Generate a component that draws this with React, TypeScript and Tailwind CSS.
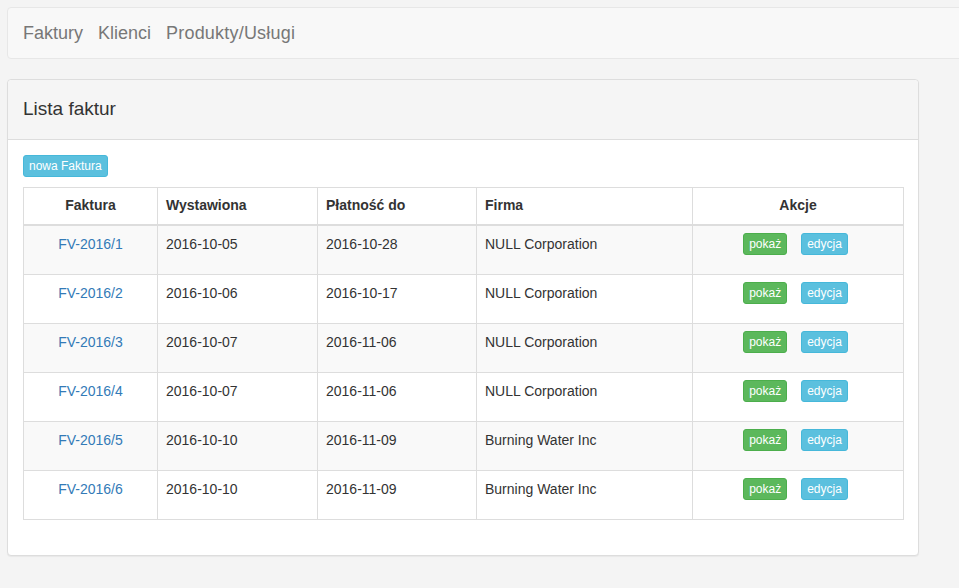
import React from "react";

const rows = [
  ["FV-2016/1", "2016-10-05", "2016-10-28", "NULL Corporation"],
  ["FV-2016/2", "2016-10-06", "2016-10-17", "NULL Corporation"],
  ["FV-2016/3", "2016-10-07", "2016-11-06", "NULL Corporation"],
  ["FV-2016/4", "2016-10-07", "2016-11-06", "NULL Corporation"],
  ["FV-2016/5", "2016-10-10", "2016-11-09", "Burning Water Inc"],
  ["FV-2016/6", "2016-10-10", "2016-11-09", "Burning Water Inc"],
];

export default function App() {
  return (
    <div
      className="w-[959px] h-[588px] overflow-hidden bg-[#f4f4f4] pt-[7px] pl-[7px] text-[14px] text-[#333]"
      style={{ fontFamily: '"Liberation Sans", Arial, sans-serif' }}
    >
      <nav className="w-[970px] h-[52px] bg-[#f8f8f8] border border-[#e7e7e7] rounded-[4px] flex items-center pl-[15px] gap-[15px] text-[18px] text-[#777]">
        <span>Faktury</span>
        <span>Klienci</span>
        <span className="tracking-[0.2px]">Produkty/Usługi</span>
      </nav>
      <div className="mt-[20px] w-[912px] bg-white border border-[#ddd] rounded-[4px] shadow-[0_1px_1px_rgba(0,0,0,0.05)]">
        <div className="h-[60px] bg-[#f5f5f5] border-b border-[#ddd] rounded-t-[4px] flex items-center px-[15px] text-[19px] text-[#333]">
          Lista faktur
        </div>
        <div className="px-[15px] pt-[15px] pb-[35px]">
          <div className="flex">
            <span className="h-[22px] px-[5px] flex items-center bg-[#5bc0de] border border-[#46b8da] rounded-[3px] text-white text-[12px]">
              nowa Faktura
            </span>
          </div>
          <table className="mt-[10px] w-[880px] border-collapse border border-[#ddd] table-fixed">
            <colgroup>
              <col className="w-[134px]" />
              <col className="w-[160px]" />
              <col className="w-[159px]" />
              <col className="w-[216px]" />
              <col className="w-[211px]" />
            </colgroup>
            <thead>
              <tr className="h-[37px]">
                <th className="border border-[#ddd] border-b-2 px-[8px] text-center font-bold">Faktura</th>
                <th className="border border-[#ddd] border-b-2 px-[8px] text-left font-bold">Wystawiona</th>
                <th className="border border-[#ddd] border-b-2 px-[8px] text-left font-bold">Płatność do</th>
                <th className="border border-[#ddd] border-b-2 px-[8px] text-left font-bold">Firma</th>
                <th className="border border-[#ddd] border-b-2 px-[8px] text-center font-bold">Akcje</th>
              </tr>
            </thead>
            <tbody>
              {rows.map((r, i) => (
                <tr key={i} className={i % 2 === 0 ? "bg-[#f9f9f9] h-[49px]" : "bg-white h-[49px]"}>
                  <td className="border border-[#ddd] px-[8px] pt-[8px] pb-[20px] align-top text-center leading-[20px] text-[#337ab7]">
                    {r[0]}
                  </td>
                  <td className="border border-[#ddd] px-[8px] pt-[8px] pb-[20px] align-top leading-[20px]">{r[1]}</td>
                  <td className="border border-[#ddd] px-[8px] pt-[8px] pb-[20px] align-top leading-[20px]">{r[2]}</td>
                  <td className="border border-[#ddd] px-[8px] pt-[8px] pb-[20px] align-top leading-[20px]">{r[3]}</td>
                  <td className="border border-[#ddd] pl-[8px] pr-[13px] pt-[7px] pb-[18px] align-top">
                    <div className="flex justify-center gap-[14px]">
                      <span className="h-[22px] px-[5px] flex items-center bg-[#5cb85c] border border-[#4cae4c] rounded-[3px] text-white text-[12px]">
                        pokaż
                      </span>
                      <span className="h-[22px] px-[5px] flex items-center bg-[#5bc0de] border border-[#46b8da] rounded-[3px] text-white text-[12px]">
                        edycja
                      </span>
                    </div>
                  </td>
                </tr>
              ))}
            </tbody>
          </table>
        </div>
      </div>
    </div>
  );
}
